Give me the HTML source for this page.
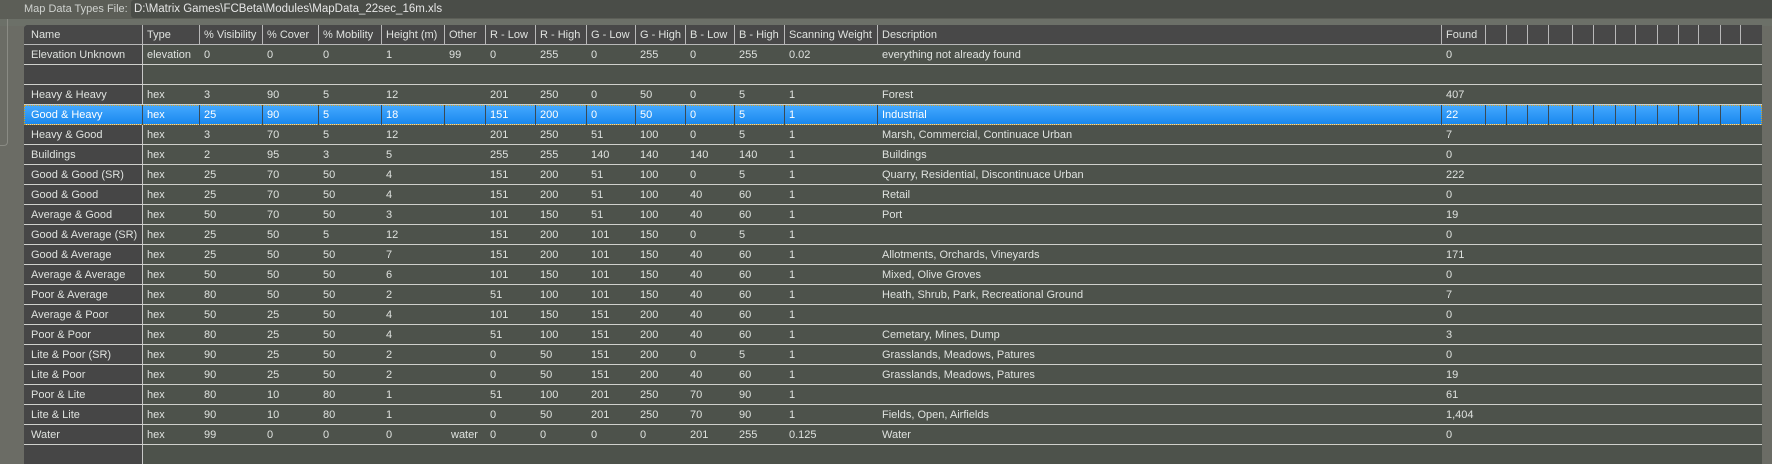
<!DOCTYPE html>
<html><head><style>
body{margin:0;width:1772px;height:464px;background:#6b6c65;position:relative;overflow:hidden;font-family:"Liberation Sans",sans-serif;font-size:11px;color:#dfe2df}
.top{position:absolute;left:0;top:0;width:1772px;height:19px;background:#5c5e57}
.band{position:absolute;left:0;top:19px;width:1772px;height:7px;background:#6c7068}
.lp{position:absolute;left:0;top:19px;width:7px;height:126px;border-right:1px solid #8a8b84;border-bottom:1px solid #8a8b84;border-radius:0 0 4px 0}
.lbl{position:absolute;left:24px;top:3px;color:#cfd2cf;font-size:11px}
.inp{position:absolute;left:131px;top:0;width:1641px;height:18px;background:#4a4d48;border-radius:3px 0 0 3px;padding-left:3px;line-height:18px;color:#e6e6e6;font-size:11.5px}
.tbl{position:absolute;left:24px;top:25px;width:1738px;height:439px;background:#4d524b;border-radius:4px 0 0 0;overflow:hidden}
.namebg{position:absolute;left:0;top:0;width:118px;height:439px;background:#464646;border-right:1px solid #c8c8c8}
.row{position:absolute;left:0;height:20px;width:1738px;border-bottom:1px solid #cfd0cc;box-sizing:border-box}
.row span{position:absolute;top:0;line-height:20px;white-space:nowrap}
.hdr{top:0;background:#484848;border-bottom-color:#b8b8b8}
.hdr i{position:absolute;top:0;height:20px;border-left:1px solid #b8b8b8}
.sel{background:linear-gradient(#45a9ff,#1a88ee);outline:1px dotted #d4a020;outline-offset:-1px;color:#fff}
.sel i{position:absolute;top:0;height:20px;border-left:1px solid #3a4a55}
</style></head><body>
<div class="top"></div><div class="band"></div><div class="lp"></div>
<div class="lbl">Map Data Types File:</div>
<div class="inp">D:\Matrix Games\FCBeta\Modules\MapData_22sec_16m.xls</div>
<div class="tbl" id="t"><div class="namebg"></div></div>
<script>
var C=[24,142,199,262,318,381,444,485,535,586,635,685,734,784,877,1441,1485,1506,1527,1548,1572,1593,1615,1635,1657,1678,1698,1720,1740,1762];
var H=["Name","Type","% Visibility","% Cover","% Mobility","Height (m)","Other","R - Low","R - High","G - Low","G - High","B - Low","B - High","Scanning Weight","Description","Found"];
var R=[
["Elevation Unknown","elevation","0","0","0","1","99","0","255","0","255","0","255","0.02","everything not already found","0"],
null,
["Heavy & Heavy","hex","3","90","5","12","","201","250","0","50","0","5","1","Forest","407"],
["Good & Heavy","hex","25","90","5","18","","151","200","0","50","0","5","1","Industrial","22"],
["Heavy & Good","hex","3","70","5","12","","201","250","51","100","0","5","1","Marsh, Commercial, Continuace Urban","7"],
["Buildings","hex","2","95","3","5","","255","255","140","140","140","140","1","Buildings","0"],
["Good & Good (SR)","hex","25","70","50","4","","151","200","51","100","0","5","1","Quarry, Residential, Discontinuace Urban","222"],
["Good & Good","hex","25","70","50","4","","151","200","51","100","40","60","1","Retail","0"],
["Average & Good","hex","50","70","50","3","","101","150","51","100","40","60","1","Port","19"],
["Good & Average (SR)","hex","25","50","5","12","","151","200","101","150","0","5","1","","0"],
["Good & Average","hex","25","50","50","7","","151","200","101","150","40","60","1","Allotments, Orchards, Vineyards","171"],
["Average & Average","hex","50","50","50","6","","101","150","101","150","40","60","1","Mixed, Olive Groves","0"],
["Poor & Average","hex","80","50","50","2","","51","100","101","150","40","60","1","Heath, Shrub, Park, Recreational Ground","7"],
["Average & Poor","hex","50","25","50","4","","101","150","151","200","40","60","1","","0"],
["Poor & Poor","hex","80","25","50","4","","51","100","151","200","40","60","1","Cemetary, Mines, Dump","3"],
["Lite & Poor (SR)","hex","90","25","50","2","","0","50","151","200","0","5","1","Grasslands, Meadows, Patures","0"],
["Lite & Poor","hex","90","25","50","2","","0","50","151","200","40","60","1","Grasslands, Meadows, Patures","19"],
["Poor & Lite","hex","80","10","80","1","","51","100","201","250","70","90","1","","61"],
["Lite & Lite","hex","90","10","80","1","","0","50","201","250","70","90","1","Fields, Open, Airfields","1,404"],
["Water","hex","99","0","0","0","water","0","0","0","0","201","255","0.125","Water","0"]];
var tb=document.getElementById('t'),h='';
h+='<div class="row hdr">';
for(var j=1;j<C.length-1;j++)h+='<i style="left:'+(C[j]-24)+'px"></i>';
for(var j=0;j<H.length;j++)h+='<span style="left:'+(C[j]-24+(j?5:7))+'px">'+H[j].replace(/&/g,'&amp;')+'</span>';
h+='</div>';
for(var i=0;i<R.length;i++){var r=R[i],yy=20+20*i;
 var cls=i==3?'row sel':'row';
 h+='<div class="'+cls+'" style="top:'+yy+'px">';
 if(i==3)for(var j=1;j<C.length-1;j++)h+='<i style="left:'+(C[j]-24)+'px"></i>';
 if(r)for(var j=0;j<r.length;j++){var x=C[j]-24+(j?5:7);if(j==6&&r[j]=='water')x=C[7]-24-34;h+='<span style="left:'+x+'px">'+r[j].replace(/&/g,'&amp;')+'</span>';}
 h+='</div>';}
tb.innerHTML+=h;
</script>
</body></html>
